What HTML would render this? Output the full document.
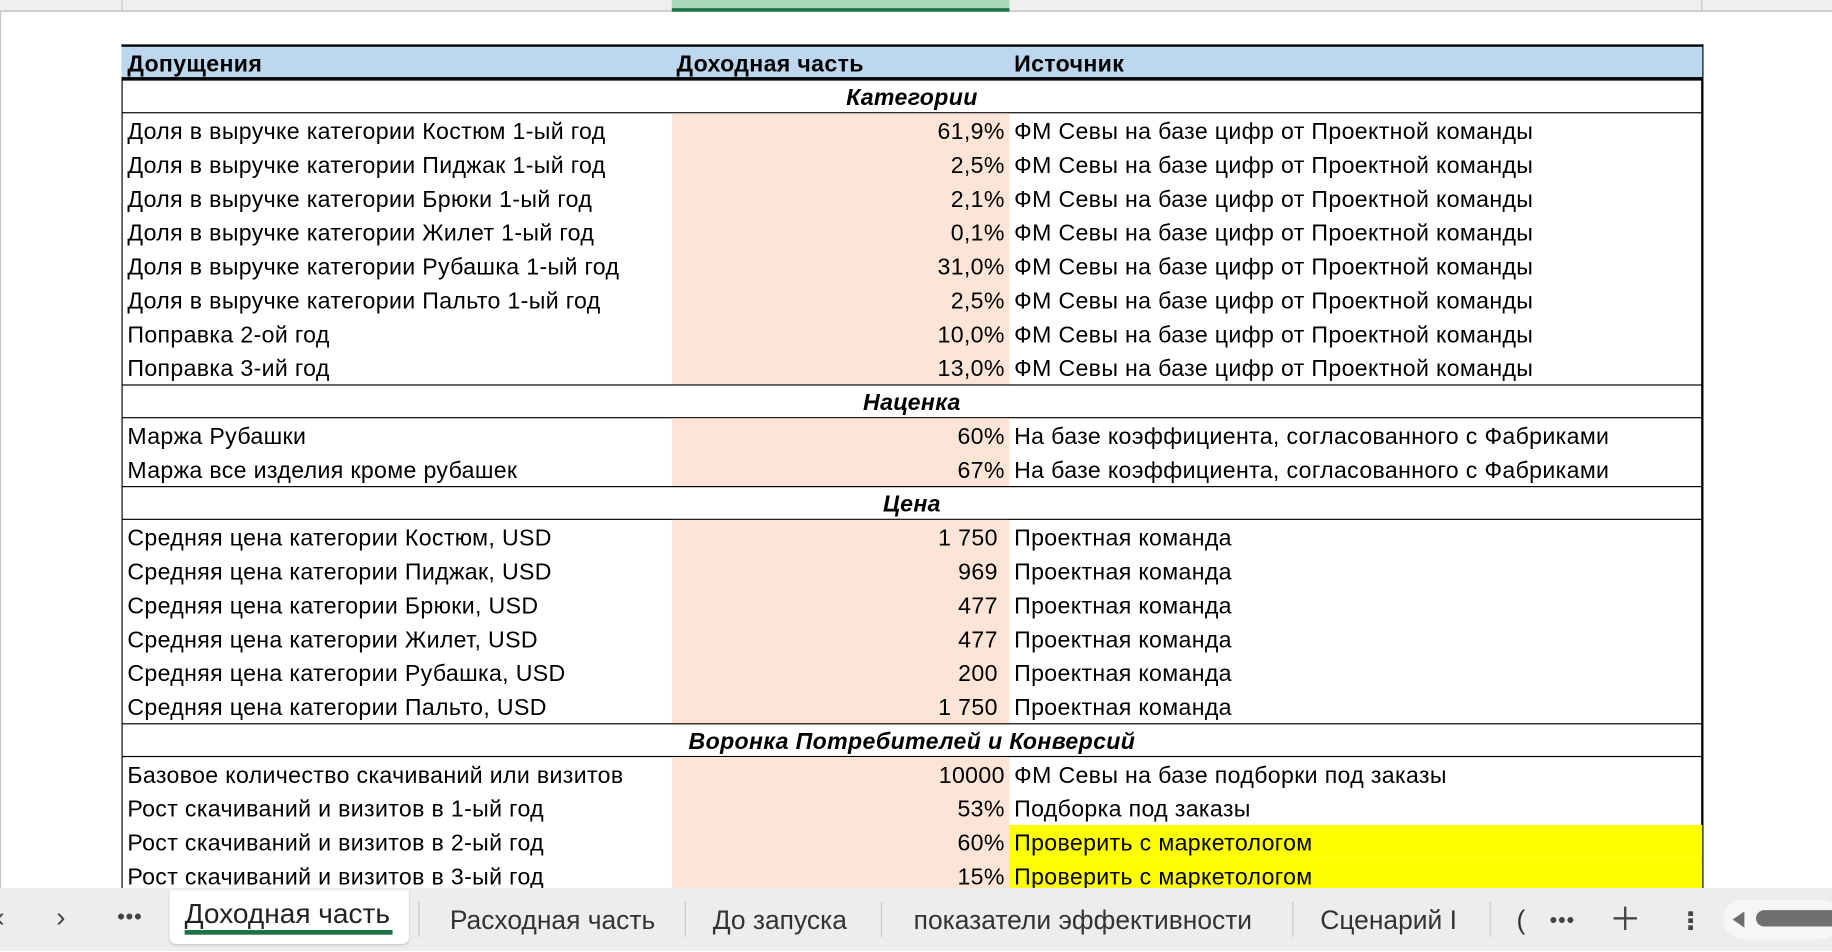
<!DOCTYPE html>
<html><head><meta charset="utf-8"><style>
html,body{margin:0;padding:0;width:1832px;height:952px;overflow:hidden;background:#fff}
#s{position:absolute;left:0;top:0;width:1568px;height:814px;transform:scale(1.16837);transform-origin:0 0;font-family:"Liberation Sans","DejaVu Sans",sans-serif;color:#000}
.a{position:absolute}
.hdr{left:0;top:0;width:1568px;height:9px;background:#efefef;border-bottom:1px solid #b8b8b8}
.row{position:absolute;left:104px;width:1353px;height:29px;font-size:19.8px;letter-spacing:0.3px;line-height:33px}
.row div{position:absolute;top:0;height:29px;white-space:nowrap;overflow:hidden}
.b{left:5px;width:466px}
.c{left:471px;width:289px;background:#fce4d6;text-align:right;padding-right:4px;box-sizing:border-box}
.d{left:760px;width:593px;padding-left:4px;box-sizing:border-box}
.sec{text-align:center;font-weight:bold;font-style:italic;border-top:1px solid #000;border-bottom:1px solid #000;box-sizing:border-box;line-height:30px}
.tab{position:absolute;top:775px;font-size:22.6px;color:#333;white-space:nowrap}
.sep{position:absolute;top:772px;width:1px;height:30px;background:#c8c8c8}
</style></head><body><div id="s">
<div class="a hdr"></div>
<div class="a" style="left:104px;top:0;width:1px;height:9px;background:#c8c8c8"></div>
<div class="a" style="left:575px;top:0;width:289px;height:7px;background:#a7d8b8;border-bottom:3px solid #217346"></div>
<div class="a" style="left:1456px;top:0;width:1px;height:9px;background:#c8c8c8"></div>
<div class="a" style="left:0;top:9px;width:1px;height:751px;background:#c8c8c8"></div>

<div class="a" style="left:104px;top:38px;width:1354px;height:722px;border-left:1px solid #000;border-right:2px solid #000;border-top:3px solid #000;box-sizing:border-box"></div>

<div class="row" style="top:40px;background:#bdd7ee;border-bottom:2px solid #000;height:28px;font-weight:bold;box-sizing:border-box;line-height:31px"><div class="b">Допущения</div><div class="a" style="left:475px">Доходная часть</div><div class="a" style="left:764px">Источник</div></div>
<div class="row sec" style="top:68px">Категории</div>
<div class="row" style="top:97px"><div class="b">Доля в выручке категории Костюм 1-ый год</div><div class="c">61,9%</div><div class="d">ФМ Севы на базе цифр от Проектной команды</div></div>
<div class="row" style="top:126px"><div class="b">Доля в выручке категории Пиджак 1-ый год</div><div class="c">2,5%</div><div class="d">ФМ Севы на базе цифр от Проектной команды</div></div>
<div class="row" style="top:155px"><div class="b">Доля в выручке категории Брюки 1-ый год</div><div class="c">2,1%</div><div class="d">ФМ Севы на базе цифр от Проектной команды</div></div>
<div class="row" style="top:184px"><div class="b">Доля в выручке категории Жилет 1-ый год</div><div class="c">0,1%</div><div class="d">ФМ Севы на базе цифр от Проектной команды</div></div>
<div class="row" style="top:213px"><div class="b">Доля в выручке категории Рубашка 1-ый год</div><div class="c">31,0%</div><div class="d">ФМ Севы на базе цифр от Проектной команды</div></div>
<div class="row" style="top:242px"><div class="b">Доля в выручке категории Пальто 1-ый год</div><div class="c">2,5%</div><div class="d">ФМ Севы на базе цифр от Проектной команды</div></div>
<div class="row" style="top:271px"><div class="b">Поправка 2-ой год</div><div class="c">10,0%</div><div class="d">ФМ Севы на базе цифр от Проектной команды</div></div>
<div class="row" style="top:300px"><div class="b">Поправка 3-ий год</div><div class="c">13,0%</div><div class="d">ФМ Севы на базе цифр от Проектной команды</div></div>
<div class="row sec" style="top:329px">Наценка</div>
<div class="row" style="top:358px"><div class="b">Маржа Рубашки</div><div class="c">60%</div><div class="d">На базе коэффициента, согласованного с Фабриками</div></div>
<div class="row" style="top:387px"><div class="b">Маржа все изделия кроме рубашек</div><div class="c">67%</div><div class="d">На базе коэффициента, согласованного с Фабриками</div></div>
<div class="row sec" style="top:416px">Цена</div>
<div class="row" style="top:445px"><div class="b">Средняя цена категории Костюм, USD</div><div class="c" style="padding-right:10px">1 750</div><div class="d">Проектная команда</div></div>
<div class="row" style="top:474px"><div class="b">Средняя цена категории Пиджак, USD</div><div class="c" style="padding-right:10px">969</div><div class="d">Проектная команда</div></div>
<div class="row" style="top:503px"><div class="b">Средняя цена категории Брюки, USD</div><div class="c" style="padding-right:10px">477</div><div class="d">Проектная команда</div></div>
<div class="row" style="top:532px"><div class="b">Средняя цена категории Жилет, USD</div><div class="c" style="padding-right:10px">477</div><div class="d">Проектная команда</div></div>
<div class="row" style="top:561px"><div class="b">Средняя цена категории Рубашка, USD</div><div class="c" style="padding-right:10px">200</div><div class="d">Проектная команда</div></div>
<div class="row" style="top:590px"><div class="b">Средняя цена категории Пальто, USD</div><div class="c" style="padding-right:10px">1 750</div><div class="d">Проектная команда</div></div>
<div class="row sec" style="top:619px">Воронка Потребителей и Конверсий</div>
<div class="row" style="top:648px"><div class="b">Базовое количество скачиваний или визитов</div><div class="c">10000</div><div class="d">ФМ Севы на базе подборки под заказы</div></div>
<div class="row" style="top:677px"><div class="b">Рост скачиваний и визитов в 1-ый год</div><div class="c">53%</div><div class="d">Подборка под заказы</div></div>
<div class="row" style="top:706px"><div class="b">Рост скачиваний и визитов в 2-ый год</div><div class="c">60%</div><div class="d" style="background:#ffff00">Проверить с маркетологом</div></div>
<div class="row" style="top:735px"><div class="b">Рост скачиваний и визитов в 3-ый год</div><div class="c">15%</div><div class="d" style="background:#ffff00">Проверить с маркетологом</div></div>

<div class="a" style="left:0;top:760px;width:1568px;height:54px;background:#ededed"></div>
<div class="a" style="left:145px;top:762px;width:205px;height:46px;background:#fff;border-radius:0 0 6px 6px;box-shadow:0 1px 2px rgba(0,0,0,.15)"></div>
<div class="tab" style="left:-4px;top:772px;font-size:24px;color:#444">‹</div>
<div class="tab" style="left:48px;top:772px;font-size:24px;color:#444">›</div>
<div class="tab" style="left:100px;top:777px;font-size:12px;font-weight:bold;color:#444">●●●</div>
<div class="tab" style="left:158px;top:769px;font-size:24px;color:#222">Доходная часть</div>
<div class="a" style="left:158px;top:796px;width:178px;height:4px;background:#1e7145"></div>
<div class="sep" style="left:358px"></div>
<div class="tab" style="left:385px">Расходная часть</div>
<div class="sep" style="left:586px"></div>
<div class="tab" style="left:610px">До запуска</div>
<div class="sep" style="left:754px"></div>
<div class="tab" style="left:782px">показатели эффективности</div>
<div class="sep" style="left:1106px"></div>
<div class="tab" style="left:1130px">Сценарий I</div>
<div class="sep" style="left:1275px"></div>
<div class="tab" style="left:1298px">(</div>
<div class="tab" style="left:1326px;top:780px;font-size:12px;font-weight:bold;color:#444">●●●</div>
<div class="a" style="left:1381px;top:785px;width:20px;height:2px;background:#444"></div>
<div class="a" style="left:1390px;top:776px;width:2px;height:20px;background:#444"></div>
<div class="a" style="left:1445px;top:780px;width:4px;height:4px;background:#444"></div>
<div class="a" style="left:1445px;top:786px;width:4px;height:4px;background:#444"></div>
<div class="a" style="left:1445px;top:792px;width:4px;height:4px;background:#444"></div>
<div class="a" style="left:1475px;top:770px;width:100px;height:34px;background:#f6f6f6;border-radius:17px"></div>
<div class="a" style="left:1483px;top:780px;width:0;height:0;border-top:7px solid transparent;border-bottom:7px solid transparent;border-right:10px solid #6e6e6e"></div>
<div class="a" style="left:1503px;top:779px;width:80px;height:14px;background:#707070;border-radius:7px"></div>
</div></body></html>
